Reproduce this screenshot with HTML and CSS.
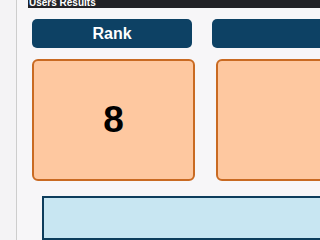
FILE: index.html
```html
<!DOCTYPE html>
<html>
<head>
<meta charset="utf-8">
<link rel="stylesheet" href="styles.css">
</head>
<body>
<div class="layout">
  <div class="sidebar"></div>
  <div class="main">
    <div class="section-head"><span class="section-title">Users Results</span></div>
    <div class="content">
      <div class="labels">
        <div class="label">Rank</div>
        <div class="label"></div>
      </div>
      <div class="cards">
        <div class="card">8</div>
        <div class="card"></div>
      </div>
      <div class="info"></div>
    </div>
  </div>
</div>
</body>
</html>
```

FILE: styles.css
```css
html {
  background: #f7f6f8;
}
html, body {
  margin: 0;
  padding: 0;
  overflow: hidden;
  font-family: "Liberation Sans", Arial, sans-serif;
}
.layout {
  display: flex;
  min-height: 100vh;
}
.sidebar {
  width: 16px;
  flex: none;
  background: #f4f3f5;
  border-right: 1px solid #cdcdcd;
}
.main {
  flex: 1;
  min-width: 0;
  padding-left: 11px;
  overflow: hidden;
}
.section-head {
  height: 8px;
  background: #222226;
  overflow: hidden;
  white-space: nowrap;
}
.section-title {
  display: block;
  margin-top: -2px;
  margin-left: 1px;
  color: #ffffff;
  font-size: 10px;
  font-weight: bold;
  line-height: 10px;
}
.content {
  padding: 11px 0 0 4px;
}
.labels {
  display: flex;
  gap: 20px;
}
.label {
  flex: none;
  width: 160px;
  height: 29px;
  border-radius: 5px;
  background: #0d4164;
  color: #ffffff;
  font-size: 16px;
  font-weight: bold;
  display: flex;
  align-items: center;
  justify-content: center;
}
.cards {
  display: flex;
  gap: 21px;
  margin-top: 11px;
}
.card {
  flex: none;
  box-sizing: border-box;
  width: 163px;
  height: 122px;
  border: 2px solid #c96a22;
  border-radius: 6px;
  background: #fec8a0;
  color: #000000;
  font-size: 37px;
  font-weight: bold;
  display: flex;
  align-items: center;
  justify-content: center;
}
.info {
  margin: 15px 0 0 10px;
  width: 300px;
  height: 40px;
  border: 2px solid #0d3d5c;
  background: #c8e6f2;
}
```
